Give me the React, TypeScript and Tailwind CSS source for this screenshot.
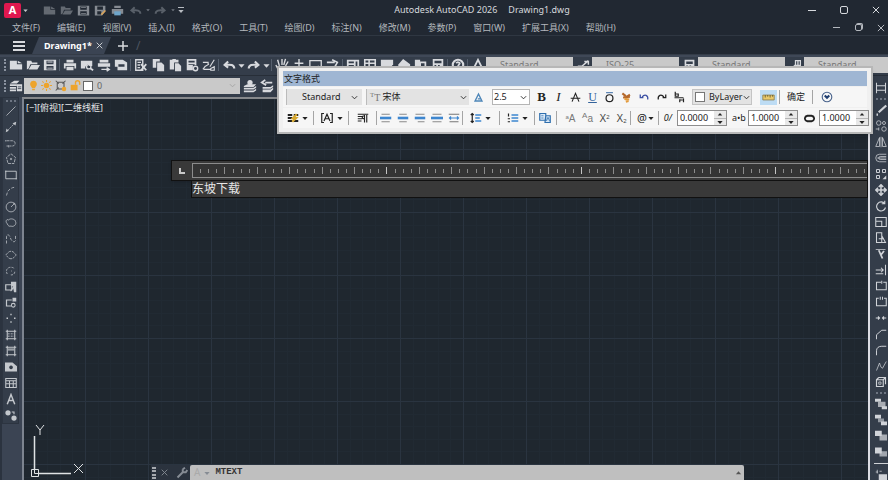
import type { ReactNode } from 'react'
import { clsx } from 'clsx'

const solid = { fill: 'currentColor', stroke: 'none' }
const blue = { stroke: '#3d86cf', strokeWidth: 2 }

// every glyph lives on a 16x16 grid
const icons: Record<string, ReactNode> = {
  new: <path {...solid} d="M1 3h8v4h6v6H1zM10 3l5 3h-5z" />,
  open: <path {...solid} d="M1 3h5l1 2h6v2H5l-2 5-2 1zM6 8h10l-3 5H3z" />,
  save: <path {...solid} fillRule="evenodd" d="M1 2h14v12H1zM4 3v4h8V3zM4 9v4h8V9zM5 4h6v1H5zM5 11h6v1H5z" />,
  saveAs: (
    <>
      <path {...solid} fillRule="evenodd" d="M1 2h13v7l-4 5H1zM4 3v4h7V3zM4 9v4h5V9z" />
      <path stroke="#d8a45b" strokeWidth="2" d="M9 13l5-5" />
    </>
  ),
  print: <path {...solid} fillRule="evenodd" d="M4 2h8v3H4zM1 6h14v6h-2V9H3v3H1zM4 10h8v4H4z" />,
  printBlue: (
    <>
      <path {...solid} d="M4 2h8v3H4zM1 6h14v6H1z" />
      <path fill="#6ea5c9" stroke="none" d="M4 9h8v5H4z" />
    </>
  ),
  preview: <><path {...solid} d="M1 3h13v6h-3L9 7l-3 3v2H1z" /><circle cx="10" cy="10" r="2.5" strokeWidth="1.5" /><path strokeWidth="2" d="M12 12l3 2" /></>,
  publish: <><path {...solid} d="M3 2h10v3H3zM1 6h14v4H1z" /><path strokeWidth="1.6" d="M5 13h9M11 11l3 2-3 2" /></>,
  plot3d: <path {...solid} fillRule="evenodd" d="M1 2h9l5 3v9H4v-4H1zM5 7v3h7V7z" />,
  cut: <><path strokeWidth="1.6" d="M2 2h8v12H2zM4 5h4M4 8h3M4 11h3" /><path d="M8 7l6 7M14 7l-6 7" strokeWidth="2" /></>,
  copy: <><path {...solid} d="M2 1h8v3H6v7H2z" /><path {...solid} d="M7 5h5l3 3v7H7z" /></>,
  paste: <><path {...solid} d="M2 2h3V1h4v1h3v3H7v8H2z" /><path {...solid} d="M8 6h4l3 3v6H8z" /></>,
  match: <><path {...solid} fillRule="evenodd" d="M2 1h11v7H9v6H2zM4 3v2h7V3zM4 7v1h7V7z" /><circle cx="12" cy="12" r="2.5" strokeWidth="1.6" /></>,
  brush: <path strokeWidth="1.3" d="M1 5h6v2M2 13h8M3 10l5-3M9 10l5-8M10 12l4-2v4h-4zM1 13l3-4" />,
  undo: <path strokeWidth="2.4" d="M14 12c0-4-4-5-10-4M7 4L3 8l4 3" />,
  redo: <path strokeWidth="2.4" d="M2 12c0-4 4-5 10-4M9 4l4 4-4 3" />,
  caret: <path {...solid} d="M1 5h14l-7 8z" />,
  caretUp: <path {...solid} d="M2 12h12L8 5z" />,
  chevron: <path d="M2 5l6 6 6-6" strokeWidth="2" />,
  hand: <path strokeWidth="1.6" d="M4 14L1 8M5 9L3 2M8 8V1M10 8l2-7M12 9l3-5M5 14h7" />,
  zoomPlus: <path strokeWidth="1.6" d="M8 1v10M3 6h10M5 13h6" />,
  zoomWin: <path strokeWidth="1.5" d="M1 3h13v9H1zM10 9l5 5" />,
  zoomPrev: <path strokeWidth="1.8" d="M1 5h9M7 2l6 3-4 7" />,
  palette: <path {...solid} fillRule="evenodd" d="M1 2h14v12H1zM3 4v2h6V4zM3 8v1h6V8zM11 4v8h2V4z" />,
  grid: <path strokeWidth="1.8" d="M2 2h12v12H2zM2 6h12M2 10h12M7 2v12" />,
  sheet: <path {...solid} d="M1 2h14v5l-5 7H1z" />,
  tag: <path {...solid} d="M1 8l6-7 8 6v7H6z" />,
  books: <path {...solid} fillRule="evenodd" d="M1 2h6v2h7v10H1zM8 6v6h4V6z" />,
  calc: <path {...solid} fillRule="evenodd" d="M2 1h12v14H2zM4 3v3h8V3zM4 8v2h2V8zM8 8v2h2V8z" />,
  help: <><circle cx="8" cy="8" r="6" strokeWidth="2.4" /><path strokeWidth="2" d="M6 6c1-2 4-1 4 0s-2 2-2 4" /></>,
  textStyle: <path strokeWidth="2" d="M2 14L8 2l6 12M4 10h8" />,
  dimStyle: <path strokeWidth="1.8" d="M1 9h5l8-7M9 3h5v4" />,
  leader: <path strokeWidth="1.6" d="M2 13l6-6M8 2h6v6H8zM11 2v6" />,
  layers: <><path {...solid} d="M1 5l5-3h6l-3 3zM1 6h8v2H1zM1 9h7v2H1zM1 12h7v2H1z" /><path {...solid} d="M9 6h6v8H9z" /><path stroke="#38414f" d="M10 9h4M10 11h4" /></>,
  layerUp: <><path {...solid} d="M1 8l4-2h10l-3 3H1zM1 10h11l3-2v2l-3 2H1zM1 13h11l3-2v2l-3 2H1z" /><circle {...solid} cx="8" cy="4" r="3" /></>,
  layerPrev: <><path {...solid} d="M3 9h9l3-2v2l-3 2H3zM3 12h9l3-2v2l-3 3H3z" /><path strokeWidth="2" d="M14 4H6M6 1L2 4l5 3" /></>,
  bulb: <path {...solid} d="M8 1a5 5 0 0 0-3 9l1 2h4l1-2a5 5 0 0 0-3-9zM6 13h4v2H6z" />,
  sun: <><circle {...solid} cx="8" cy="8" r="4" /><path strokeWidth="1.5" d="M8 0v3M8 13v3M0 8h3M13 8h3M2 2l2 2M12 12l2 2M2 14l2-2M12 4l2-2" /></>,
  vpFreeze: <><path stroke="#555" strokeWidth="1.4" d="M3 3h9v9H3zM1 1l4 4M14 1l-4 4M1 14l4-4" /><circle fill="#eda42c" stroke="none" cx="12" cy="12" r="3" /></>,
  unlock: <><path {...solid} d="M1 7h10v8H1z" /><path strokeWidth="2" d="M8 7V4a3 3 0 0 1 6 0v3" /></>,
  // draw
  line: <path d="M2 14L14 2" />,
  xline: <><path d="M3 13L13 3" strokeDasharray="3 1" /><path {...solid} d="M1 15l1-5 3 3zM15 1l-1 5-4-3z" /></>,
  pline: <path d="M2 5h8a3 3 0 0 1 0 7H6M2 12h3M1 4v2M5 11v3" strokeDasharray="4 1" />,
  polygon: <><path d="M8 1l6 5-2 8H4L2 6z" strokeDasharray="4 1" /><circle cx="8" cy="8" r="1" /></>,
  rect: <path d="M1 3h14v10H1zM1 2v2M15 12v2" strokeWidth="1.2" />,
  arc: <path d="M2 14C3 7 8 3 14 3" strokeDasharray="4 2" />,
  circle: <><circle cx="8" cy="8" r="6.5" /><path d="M8 8l4-4M11 3h2v2" /></>,
  cloud: <path d="M3 9C0 6 2 2 5 4c2-3 9-1 9 2 2 4-3 8-6 6-2 1-4 0-5-3z" />,
  spline: <path d="M2 14V5c0-4 4-3 5 1s5 8 7 4V2" strokeDasharray="4 2" />,
  ellipse: <path d="M1 8c3-3 4-5 7-5s4 2 7 5c-3 3-4 5-7 5S4 11 1 8z" strokeDasharray="4 1" />,
  ellipseArc: <path d="M3 12C-1 5 7 0 13 5M8 8h1M13 9c0 3-3 5-6 4" strokeDasharray="3 1.5" />,
  insert: <><path strokeWidth="1.6" d="M1 5h8v7H1z" /><path {...solid} d="M8 1h7v14h-3l-1-5-3 4-1-1 4-6H8z" /></>,
  block: <><path strokeWidth="1.6" d="M9 4H2v8h6" /><path {...solid} d="M10 1h5v5h-5z" /><circle cx="11" cy="11" r="2.5" strokeWidth="1.4" /></>,
  point: <path strokeWidth="1.8" d="M8 1v2M8 11v2M2 7h2M12 7h2" />,
  hatch: <><path strokeWidth="1.4" d="M1 3h14M1 13h14M3 1v14M13 1v14" /><path d="M4 6h8M4 8h8M4 10h8" strokeDasharray="1 1" /></>,
  gradient: <><path strokeWidth="1.4" d="M1 3h14M1 13h14M3 1v14M13 1v14" /><path strokeWidth="3" d="M4 6h8" opacity=".7" /></>,
  region: <path {...solid} fillRule="evenodd" d="M0 2h10l6 5v7H0zM8 6a2.500 2.500 0 1 0 .1 0z" />,
  table: <path strokeWidth="1.4" d="M1 2h14v12H1zM1 5h14M6 5v9M11 5v9M1 9h14" />,
  mtext: <path strokeWidth="1.9" d="M3 15L8 2l5 13M5 10h6" />,
  points: <><circle {...solid} cx="4" cy="5" r="3.5" /><circle {...solid} cx="12" cy="12" r="3.5" /><path d="M9 4h3v3" strokeWidth="1.5" /></>,
  // modify
  dim: <path strokeWidth="1.4" d="M2 1v14M14 1v14M2 5h12M2 11h12" />,
  pencil: <path strokeWidth="3" d="M15 2L5 11M2 14h2" />,
  copyObj: <><circle cx="5" cy="4" r="3" /><circle cx="12" cy="4" r="2" /><circle cx="12" cy="12" r="3" /><path d="M1 12h4M5 10v4" /></>,
  mirror: <path d="M6 2v12H1zM10 2v12h5zM8 1v14" />,
  offset: <path d="M15 3H6a5 5 0 0 0 0 10h9M15 6H7a2 2 0 0 0 0 4h8M3 8h12" />,
  array: <><path strokeWidth="1.3" d="M2 2h4v4H2zM10 2h4v4h-4zM2 10h4v4H2z" /><path {...solid} d="M15 10v5h-5z" /></>,
  move: <path strokeWidth="2" d="M8 1v14M1 8h14M5 4l3-3 3 3M5 12l3 3 3-3M4 5L1 8l3 3M12 5l3 3-3 3" />,
  rotate: <path strokeWidth="1.5" d="M13 5A6 6 0 1 0 14 10M13 1v4H9" />,
  scale: <path strokeWidth="1.4" d="M1 2h14v12H1zM1 7h8v7" />,
  stretch: <path strokeWidth="1.4" d="M2 1h7v13H2zM9 5l5 9H9M5 9h7" />,
  trim: <><path d="M1 2h13" /><path strokeWidth="2.4" d="M5 3l5 11M12 4L8 9" /></>,
  extend: <path strokeWidth="1.4" d="M1 8h10M8 5l3 3-3 3M14 1v14M1 13h10" />,
  breakAt: <path strokeWidth="1.4" d="M8 3H2v10h13V3h-4M9 1v4" />,
  breakObj: <path strokeWidth="1.4" d="M5 3H2v10h13V3h-3M7 1v4M10 1v4" />,
  join: <path strokeWidth="1.5" d="M1 8h5M10 8h5M4 6l2 2-2 2M12 6l-2 2 2 2" />,
  chamfer: <path strokeWidth="1.3" d="M2 15V9l7-6h6" />,
  fillet: <path strokeWidth="1.3" d="M2 15V9c0-4 3-6 7-6h6" />,
  blend: <path d="M2 14l4-10c1 2 1 6 4 7l5-9" />,
  explode: <><path strokeWidth="1.5" d="M2 5h9v9H2zM5 2h9v9M2 5l3-3M11 5l3-3" /><path d="M5 8h3v3H5z" /></>,
  orderFront: <><path {...solid} d="M0 1h8v4H0zM9 11h7v4H9z" /><path {...solid} opacity=".75" d="M4 5h10v7H4z" /></>,
  orderBack: <><path {...solid} d="M0 1h8v5H0zM8 10h8v5H8z" /><path {...solid} opacity=".6" d="M4 6h8v5H4z" /></>,
  orderAbove: <><path {...solid} d="M0 1h9v7H0z" /><path {...solid} opacity=".75" d="M6 6h10v8H6z" /></>,
  orderUnder: <><path {...solid} opacity=".7" d="M6 7h10v7H6z" /><path {...solid} d="M0 2h9v8H0z" /></>,
  bringText: <><path {...solid} d="M5 7h11v8H5z" /><path d="M1 4h3M6 3h3M3 1v5" /></>,
  // text formatting
  annotative: <path stroke="#4e86b8" strokeWidth="2" d="M3 13L8 3l5 10zM7 10h4" />,
  strike: <path strokeWidth="1.6" d="M3 14L8 2l5 12M1 9h14" />,
  overline: <><path strokeWidth="1.5" stroke="#3d6fa8" d="M3 1h10" /><circle cx="8" cy="9" r="5" strokeWidth="1.8" /></>,
  painter: <><path stroke="#b5682a" strokeWidth="3" d="M2 2l5 4M13 4L8 7M3 8l10-1" /><path stroke="#e39b3d" strokeWidth="3" d="M5 10l7 1M7 14l4-1" /></>,
  undoText: <path stroke="#3a4fa3" strokeWidth="2" d="M5 8c4-5 10-3 9 4M2 4v5h5" />,
  redoText: <path strokeWidth="2" d="M11 8C7 3 1 5 2 12M14 4v5H9" />,
  stack: <path strokeWidth="1.6" d="M3 1v6h4V4H3M2 9h12M9 11v4M9 12h4M14 10v5" />,
  ruler: <><path fill="#e9c96b" stroke="#8a7a4a" d="M1 5h14v6H1z" /><path stroke="#5c522f" d="M4 5v3M7 5v2M10 5v3M13 5v2" /></>,
  options: <><circle cx="8" cy="8" r="6.4" stroke="#49638c" strokeWidth="1.5" /><path stroke="#203e70" strokeWidth="2.8" d="M5 6l3 3 3-3" /></>,
  columns: <><path strokeWidth="2.4" d="M1 4h6M1 8h6M1 12h6M9 4h6M9 12h6" /><path stroke="#d6a72e" strokeWidth="3" d="M13 3L8 8h4l-5 5" /></>,
  justify: <path strokeWidth="1.6" d="M4 2H1v12h3M12 2h3v12h-3M4 12l4-9 4 9M6 9h4" />,
  paragraph: <path strokeWidth="1.5" d="M1 3h14M1 6h6M1 9h6M1 12h5M13 4v10M10 4v10M10 5c-4 0-4 4 0 4" />,
  left: <><path strokeWidth="1.6" stroke="#8a8a8a" d="M2 3h11M2 13h11" /><path {...blue} strokeWidth="3.500" d="M0 8h15" /></>,
  center: <><path strokeWidth="1.6" stroke="#8a8a8a" d="M3 3h10M3 13h10" /><path {...blue} strokeWidth="3.500" d="M1 8h14" /></>,
  right: <><path strokeWidth="1.6" stroke="#8a8a8a" d="M2 3h12M5 13h9" /><path {...blue} strokeWidth="3.500" d="M1 8h14" /></>,
  full: <><path strokeWidth="1.6" stroke="#8a8a8a" d="M2 3h12M2 13h12" /><path {...blue} strokeWidth="3.500" d="M0 8h16" /></>,
  spread: <><path strokeWidth="1.4" stroke="#777" d="M1 3h14M2 13h12" /><path {...blue} strokeWidth="1.6" d="M2 8h12M4 6L2 8l2 2M12 6l2 2-2 2" /></>,
  spacing: <><path strokeWidth="1.6" d="M3 2v12M1 4l2-2 2 2M1 12l2 2 2-2" /><path {...blue} d="M7 4h8M7 8h6M7 12h8" /></>,
  numbering: <><path strokeWidth="1.6" d="M2 2v4M1 9h3M1 13h3" /><path {...blue} d="M6 4h9M6 8h9M6 12h9" /></>,
  field: <><path fill="#dbe9f7" stroke="#2f6fae" strokeWidth="1.6" d="M1 2h8v9H1zM9 5h6v9H8z" /><path stroke="#2f6fae" d="M3 5h3M3 8h3M10 12l2-5 2 5" /></>,
  width: <path strokeWidth="2.6" d="M5 4C0 5 0 11 5 12h6c5-1 5-7 0-8z" />,
  // command line
  close: <path strokeWidth="1.6" d="M3 3l10 10M13 3L3 13" />,
  wrench: <path strokeWidth="2.6" d="M2 14l8-8M9 3v4h4l2-3M9 3l3-2" />,
}

function Icon({ name, className = 'size-4' }: { name: string; className?: string }) {
  return (
    <svg viewBox="0 0 16 16" fill="none" stroke="currentColor" aria-hidden="true" className={clsx('shrink-0', className)}>
      {icons[name]}
    </svg>
  )
}

function Tool({ name, className = 'w-[17px]', size = 'size-[13px]' }: { name: string; className?: string; size?: string }) {
  return (
    <button type="button" aria-label={name} className={clsx('flex shrink-0 items-center justify-center', className)}>
      <Icon name={name} className={size} />
    </button>
  )
}

function Tools({ names }: { names: string[] }) {
  return (
    <>
      {names.map((name, i) => {
        if (name === '|') return <span key={i} className="mx-px h-3 w-px shrink-0 bg-[#56606e]" />
        if (name === 'caret') return <Tool key={i} name={name} className="w-2" size="size-[7px]" />
        return <Tool key={i} name={name} size="size-3.5" />
      })}
    </>
  )
}

function Grip() {
  return <span className="mr-px ml-1 h-3 w-0.5 shrink-0 border-l-2 border-dotted border-[#8b93a0]" />
}

function SideTools({ names }: { names: string[] }) {
  return (
    <div className="flex flex-col items-center">
      {names.map((name) => (
        <Tool key={name} name={name} className="h-4 w-4" size="size-3" />
      ))}
    </div>
  )
}

function Divider() {
  return <span className="h-3.5 w-px shrink-0 bg-[#a5a5a5]" />
}

function StyleSelect({ label, value }: { label: string; value: string }) {
  return (
    <select aria-label={label} className="mr-0.5 h-4 w-[87px] shrink-0 appearance-none bg-[#c9c9c9] px-3.5 text-[9px] text-[#777]">
      <option>{value}</option>
    </select>
  )
}

function NumberBox({ label, value, children }: { label: string; value: string; children: ReactNode }) {
  return (
    <div className="flex items-center">
      <label htmlFor={label} className="flex w-[18px] justify-center text-[9px]">
        {children}
      </label>
      <div className="flex h-4 w-[50px] border border-[#8d8d8d] bg-white">
        <input id={label} aria-label={label} defaultValue={value} className="w-0 min-w-0 flex-1 pl-0.5 text-[9px] outline-none" />
        <div className="flex w-3 flex-col bg-[#e8e8e8]">
          <button type="button" aria-label={`${label} +`} className="flex flex-1 items-center justify-center border-b border-[#b5b5b5]">
            <Icon name="caretUp" className="size-[6px]" />
          </button>
          <button type="button" aria-label={`${label} -`} className="flex flex-1 items-center justify-center">
            <Icon name="caret" className="size-[6px]" />
          </button>
        </div>
      </div>
    </div>
  )
}

const menus = [
  '文件(F)', '编辑(E)', '视图(V)', '插入(I)', '格式(O)', '工具(T)', '绘图(D)',
  '标注(N)', '修改(M)', '参数(P)', '窗口(W)', '扩展工具(X)', '帮助(H)',
]

const standardTools = [
  'new', 'open', 'save', '|', 'print', 'preview', 'publish', 'plot3d', '|', 'cut', 'copy', 'paste', 'match', 'brush', '|',
  'undo', 'caret', 'redo', 'caret', '|', 'hand', 'zoomPlus', 'zoomWin', 'zoomPrev', '|',
  'palette', 'grid', 'sheet', 'tag', 'books', 'calc', '|', 'help', '|', 'textStyle',
]

const drawTools = [
  'line', 'xline', 'pline', 'polygon', 'rect', 'arc', 'circle', 'cloud', 'spline', 'ellipse',
  'ellipseArc', 'insert', 'block', 'point', 'hatch', 'gradient', 'region', 'table', 'mtext', 'points',
]

const modifyTools = [
  'pencil', 'copyObj', 'mirror', 'offset', 'array', 'move', 'rotate', 'scale', 'stretch',
  'trim', 'extend', 'breakAt', 'breakObj', 'join', 'chamfer', 'fillet', 'blend', 'explode',
]

function TitleBar() {
  return (
    <header className="grid h-5 shrink-0 grid-cols-[1fr_auto_1fr] items-center">
      <div className="flex items-center pl-1 text-[#868b92]">
        <button type="button" className="flex h-[15px] w-[17px] items-center justify-center rounded-xs bg-[#e0184f] text-[11px] font-bold text-white">A</button>
        <Tool name="caret" className="mr-3 w-2 text-[#c5c8cc]" size="size-[5px]" />
        <Tool name="new" className="w-[17px] text-[#646a72]" />
        <Tool name="open" className="w-[17px] text-[#646a72]" />
        <Tool name="save" />
        <Tool name="saveAs" />
        <Tool name="printBlue" />
        <Tool name="undo" className="w-[18px] text-[#596069]" />
        <Tool name="caret" className="w-[7px] text-[#737982]" size="size-[4px]" />
        <Tool name="redo" className="w-[18px] text-[#596069]" />
        <Tool name="caret" className="w-[7px] text-[#737982]" size="size-[4px]" />
        <button type="button" aria-label="customize" className="flex w-2.5 flex-col items-center text-[#b8bcc2]">
          <span className="h-px w-1.5 bg-current" />
          <Icon name="caret" className="size-[6px]" />
        </button>
      </div>
      <div className="flex gap-[11px] pl-[76px] text-[9px] text-[#d6d9dd]">
        <span>Autodesk AutoCAD 2026</span>
        <span>Drawing1.dwg</span>
      </div>
      <div className="flex items-center justify-end gap-6 pr-2 text-[#d6d9dd]">
        <button type="button" aria-label="minimize" className="h-px w-2 bg-current" />
        <button type="button" aria-label="maximize" className="size-2 rounded-xs border border-current" />
        <Tool name="close" className="w-2" size="size-[10px]" />
      </div>
    </header>
  )
}

function TextFormatting() {
  return (
    <section className="absolute top-[66px] right-[15px] left-[277px] z-10 overflow-hidden border-2 border-[#b7b7b7] bg-[#f0f0f0] p-1 pt-[3px] text-[#222] shadow-md">
      <h2 className="h-[15px] bg-[#9fb6d3] pl-px text-[9px] leading-[15px]">文字格式</h2>
      <div className="mt-px flex h-5 items-center bg-[#f6f6f6]">
        <div className="ml-[3px] flex h-4 w-[76px] items-center border-l border-[#bbb] bg-[#e3e3e3]">
          <select aria-label="text style" className="min-w-0 flex-1 appearance-none pl-[15px] text-[9px]">
            <option>Standard</option>
          </select>
          <Icon name="chevron" className="mr-1 size-[7px]" />
        </div>
        <div className="ml-1 flex h-4 w-[103px] items-center border-l border-[#bbb] bg-[#e3e3e3] pl-[3px]">
          <span className="flex items-start font-['Liberation_Serif',serif] text-[#777]"><span className="text-[7px]">T</span><span className="text-[10px]">T</span></span>
          <select aria-label="font" className="min-w-0 flex-1 appearance-none pl-0.5 text-[9px]">
            <option>宋体</option>
          </select>
          <Icon name="chevron" className="mr-0.5 size-[7px]" />
        </div>
        <Tool name="annotative" className="mr-[5px] w-[18px]" size="size-[11px]" />
        <div className="mr-[3px] flex h-4 w-[38px] items-center border border-[#b5b5b5] bg-white">
          <input aria-label="text height" defaultValue="2.5" className="w-0 min-w-0 flex-1 pl-px text-[9px]" />
          <Icon name="chevron" className="mr-0.5 size-[7px]" />
        </div>
        <button type="button" className="w-[17px] font-['Liberation_Serif',serif] text-[13px] font-bold">B</button>
        <button type="button" className="w-[17px] font-['Liberation_Serif',serif] text-[13px] italic">I</button>
        <Tool name="strike" size="size-[11px]" />
        <button type="button" className="w-[17px] font-['Liberation_Serif',serif] text-[12px] text-[#34639b] underline">U</button>
        <Tool name="overline" size="size-[11px]" />
        <Tool name="painter" size="size-[11px]" />
        <Tool name="undoText" className="w-[18px]" size="size-2.5" />
        <Tool name="redoText" size="size-2.5" />
        <Tool name="stack" className="w-[18px]" size="size-3" />
        <div className="ml-1 flex h-4 w-[60px] items-center border border-[#c4c4c4] bg-[#e3e3e3] pl-0.5">
          <span className="size-[10px] border border-[#777] bg-white" />
          <select aria-label="color" className="min-w-0 flex-1 appearance-none pl-1 text-[9px]">
            <option>ByLayer</option>
          </select>
          <Icon name="chevron" className="mr-px size-[7px]" />
        </div>
        <span className="mx-[3px]"><Divider /></span>
        <Tool name="ruler" className="mx-0.5 h-[15px] w-[17px] bg-[#bddcf4]" />
        <Divider />
        <button type="button" className="mx-[7px] text-[9px]">确定</button>
        <Divider />
        <Tool name="options" className="ml-[5px] w-[17px]" size="size-3" />
      </div>
      <div className="mt-px flex h-5 items-center bg-[#f6f6f6] pl-px">
        <Tool name="columns" size="size-3" />
        <Tool name="caret" className="mr-1 w-2" size="size-[6px]" />
        <Divider />
        <Tool name="justify" className="ml-1 w-[17px]" size="size-3" />
        <Tool name="caret" className="mr-1 ml-px w-2" size="size-[6px]" />
        <Divider />
        <Tool name="paragraph" className="mx-[5px] w-[17px]" size="size-3" />
        <Divider />
        <span className="w-1" />
        {['left', 'center', 'right', 'full', 'spread'].map((name) => (
          <Tool key={name} name={name} size="size-3" />
        ))}
        <Divider />
        <Tool name="spacing" className="ml-1 w-[17px]" size="size-3" />
        <Tool name="caret" className="mr-[7px] w-2" size="size-[6px]" />
        <Divider />
        <Tool name="numbering" className="ml-1 w-[17px]" size="size-3" />
        <Tool name="caret" className="mr-[5px] w-2" size="size-[6px]" />
        <Divider />
        <Tool name="field" className="mr-[3px] ml-px w-[17px]" size="size-3" />
        <Divider />
        <div className="ml-[5px] flex font-['Liberation_Sans',sans-serif] text-[10px] text-[#777]">
          <button type="button" aria-label="uppercase" className="w-[17px]"><sup className="text-[6px]">a</sup>A</button>
          <button type="button" aria-label="lowercase" className="w-[17px]"><sup className="text-[8px]">A</sup>a</button>
          <button type="button" aria-label="superscript" className="w-[17px] text-[#444]">X<sup className="text-[6px]">2</sup></button>
          <button type="button" aria-label="subscript" className="w-[17px] text-[#444]">X<sub className="text-[6px]">2</sub></button>
        </div>
        <Divider />
        <button type="button" className="ml-1.5 w-[13px] text-[11px]">@</button>
        <Tool name="caret" className="mr-[3px] w-2" size="size-[6px]" />
        <Divider />
        <div className="flex gap-[3px]">
          <NumberBox label="oblique" value="0.0000"><em>0/</em></NumberBox>
          <NumberBox label="tracking" value="1.0000">a•b</NumberBox>
          <NumberBox label="width factor" value="1.0000"><Icon name="width" className="size-[11px]" /></NumberBox>
        </div>
      </div>
    </section>
  )
}

// one tick per unit, a long one every fourth, a brighter one every twenty-fourth
function RulerTicks() {
  return (
    <svg aria-hidden="true" className="h-[14px] w-full">
      {Array.from({ length: 240 }, (_, n) => {
        const i = n + 1
        const x = Math.round(i * 8.1) - 0.5
        const long = i % 4 === 0
        return <line key={i} x1={x} x2={x} y1={long ? 3 : 5} y2={long ? 10 : 9} stroke={i % 24 === 0 ? '#c4c4c4' : '#8c8c8c'} />
      })}
    </svg>
  )
}

function DrawingArea() {
  return (
    <main className="relative flex min-w-0 flex-1 flex-col overflow-hidden border-t-2 border-r-2 border-l-2 border-t-[#87898c] border-r-[#dcdde3] border-l-[#7d848f] bg-[#1f272f]">
      <svg aria-hidden="true" className="absolute inset-0 size-full">
        <defs>
          <pattern id="grid" x="61" y="50" width="63" height="63" patternUnits="userSpaceOnUse">
            <path stroke="#212a33" d="M13.5 0v63M25.5 0v63M38.5 0v63M50.5 0v63M0 13.5h63M0 25.5h63M0 38.5h63M0 50.5h63" />
            <path stroke="#2a3440" d="M.5 0v63M0 .5h63" />
          </pattern>
        </defs>
        <rect width="100%" height="100%" fill="url(#grid)" />
      </svg>

      <p className="relative mt-[3px] ml-0.5 text-[9px] leading-3 text-[#e4e6e8]">[−][俯视][二维线框]</p>

      <div className="relative mt-[46px] ml-[147px]">
        <div className="flex h-[21px] border border-[#111] bg-[#393939] shadow">
          <button type="button" aria-label="tab stop" className="flex w-5 items-center justify-center">
            <span className="size-1.5 border-b-2 border-l-2 border-[#c8c8c8]" />
          </button>
          <div className="my-0.5 min-w-0 flex-1 overflow-hidden border-y border-l border-[#8c8c8c] bg-[#343434]">
            <RulerTicks />
          </div>
        </div>
        <div className="ml-5 border border-t-0 border-[#111] bg-[#393939]">
          <input aria-label="text" defaultValue="东坡下载" className="block h-4 w-full text-[12px] leading-4 text-[#e6e6e6] outline-none" />
        </div>
      </div>

      <div className="relative mt-auto flex items-end">
        <svg viewBox="0 0 60 58" fill="none" stroke="#dfe2e4" aria-hidden="true" className="mr-[67px] h-[58px] w-[60px] shrink-0">
          <path d="M10.500 14v34M14 51.500h33" strokeWidth="1.500" />
          <path d="M7.500 47.500h7v7h-7zM10.500 46v5.500h4" />
          <path d="M12 3l4 5 4-5M16 8v5M50 42l9 9M59 42l-9 9" />
        </svg>
        <form className="mr-[124px] flex h-[15px] min-w-0 flex-1 items-center bg-[#2b333e] text-[#868c94]">
          <span className="ml-px h-3 w-1 border-x-2 border-dotted border-[#a5a9ae]" />
          <Tool name="close" className="ml-0.5 w-[13px]" size="size-[9px]" />
          <Tool name="wrench" className="mr-0.5 ml-1 w-[13px]" size="size-3" />
          <div className="flex h-full min-w-0 flex-1 items-center rounded-t-xs bg-[#bfbfbf] pr-0.5 pl-1">
            <span className="text-[10px] text-[#aaa]">A</span>
            <Icon name="caret" className="mx-1 size-[6px]" />
            <input aria-label="command" defaultValue="MTEXT" className="min-w-0 flex-1 pl-px font-['Liberation_Mono',monospace] text-[9px] font-bold text-[#333] outline-none" />
            <Tool name="caretUp" className="w-2 text-[#555]" size="size-[7px]" />
          </div>
        </form>
      </div>
    </main>
  )
}

export default function App() {
  return (
    <div className="relative flex h-screen flex-col overflow-hidden bg-[#212832] font-['Noto_Sans','Noto_Sans_CJK_SC',sans-serif] text-[#d8dade]">
      <TitleBar />

      <nav className="flex h-4 shrink-0 items-center border-b border-[#2f3742] pl-3 text-[9px] text-[#b4b8be]">
        <div className="flex flex-1 gap-[17px]">
          {menus.map((menu) => (
            <button key={menu} type="button" className="whitespace-nowrap">{menu}</button>
          ))}
        </div>
        <div className="flex items-center gap-[15px] pr-[3px]">
          <button type="button" aria-label="minimize drawing" className="h-px w-[7px] bg-current" />
          <button type="button" aria-label="restore drawing" className="size-[7px] rounded-xs border border-current shadow-[1px_-1px_0_#b4b8be]" />
          <Tool name="close" className="w-2" size="size-[10px]" />
        </div>
      </nav>

      <div className="flex h-[19px] shrink-0 items-end border-b border-[#343c48]">
        <button type="button" aria-label="start menu" className="mb-[3px] ml-[13px] flex h-[10px] w-3 flex-col justify-between">
          <span className="h-0.5 w-full bg-[#d8dade]" />
          <span className="h-0.5 w-full bg-[#d8dade]" />
          <span className="h-0.5 w-full bg-[#d8dade]" />
        </button>
        <div className="ml-[7px] flex h-[17px] w-[79px] items-center bg-[#3b4453] pl-3 [clip-path:polygon(7px_0,100%_0,calc(100%-7px)_100%,0_100%)]">
          <button type="button" className="text-[9px] font-bold text-white">Drawing1*</button>
          <Tool name="close" className="ml-0.5 w-3" size="size-[9px]" />
        </div>
        <button type="button" aria-label="new tab" className="mb-px ml-[5px] w-3.5">
          <svg viewBox="0 0 14 14" stroke="currentColor" strokeWidth="1.5" className="size-3.5"><path d="M7 2v10M2 7h10" /></svg>
        </button>
        <span className="ml-1.5 text-[12px] leading-4 text-[#4d5560]">/</span>
      </div>

      <div className="flex h-5 shrink-0 items-center overflow-hidden border-t-2 border-[#3f4857] bg-[#343d4a] pb-0.5">
        <Grip />
        <Tools names={standardTools} />
        <span className="w-1" />
        <StyleSelect label="text style list" value="Standard" />
        <Tool name="dimStyle" />
        <span className="w-0.5" />
        <StyleSelect label="dimension style" value="ISO-25" />
        <Tool name="calc" />
        <span className="w-0.5" />
        <StyleSelect label="table style" value="Standard" />
        <Tool name="leader" />
        <span className="w-0.5" />
        <StyleSelect label="leader style" value="Standard" />
      </div>

      <div className="flex h-[22px] shrink-0 items-center border-t border-[#272e38] bg-[#343d4a] pb-0.5">
        <Grip />
        <Tool name="layers" size="size-3.5" />
        <button type="button" className="mr-px flex h-4 w-[216px] items-center bg-[#c9c9c9] pl-[3px] text-[#eda42c]">
          <Icon name="bulb" className="mx-px size-[11px]" />
          <Icon name="sun" className="mx-px size-[11px]" />
          <Icon name="vpFreeze" className="mx-0.5 size-3" />
          <Icon name="unlock" className="mx-px size-[11px]" />
          <span className="mx-px size-[10px] border border-[#666] bg-white" />
          <span className="ml-[3px] flex-1 text-left text-[9px] text-[#666]">0</span>
          <Icon name="chevron" className="mr-1 size-[7px] text-[#a2a2a2]" />
        </button>
        <Tool name="layerUp" size="size-3.5" />
        <Tool name="layerPrev" size="size-3.5" />
      </div>

      <div className="flex min-h-0 flex-1 bg-[#2b333f]">
        <aside className="ml-0.5 w-5 shrink-0 bg-[#3b4453] text-[#c3c7cc]">
          <div className="w-[17px] border border-[#2c3440] bg-[#343d4a] pt-0.5">
            <div className="mx-auto mb-px h-0.5 w-2.5 border-t-2 border-dotted border-[#6d7582]" />
            <SideTools names={drawTools} />
          </div>
        </aside>
        <DrawingArea />
        <aside className="-mt-5 flex w-[18px] shrink-0 flex-col items-center overflow-hidden bg-[#343d4a] pl-1 text-[#d0d3d8]">
          <Tool name="dim" className="h-[21px] w-4" size="size-3" />
          <div className="mb-0.5 h-0.5 w-2.5 shrink-0 border-t-2 border-dotted border-[#6d7582]" />
          <SideTools names={modifyTools} />
          <div className="mt-0.5 mb-0.5 h-0.5 w-2.5 shrink-0 border-t-2 border-dotted border-[#6d7582]" />
          <SideTools names={['orderFront', 'orderBack', 'orderAbove', 'orderUnder']} />
          <div className="my-[3px] h-px w-full shrink-0 bg-[#cfd2d6]" />
          <SideTools names={['bringText']} />
        </aside>
      </div>

      <TextFormatting />
    </div>
  )
}
